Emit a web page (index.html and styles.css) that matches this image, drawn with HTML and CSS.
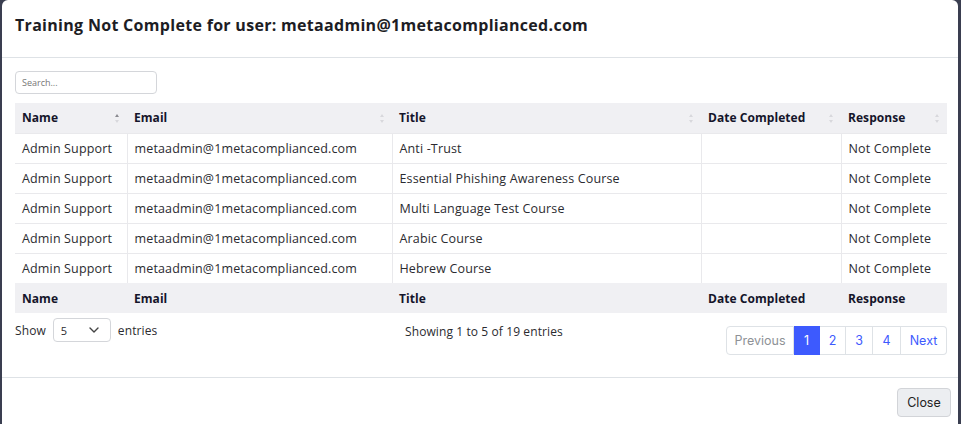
FILE: index.html
```html
<!DOCTYPE html>
<html>
<head>
<meta charset="utf-8">
<link rel="stylesheet" href="styles.css">
</head>
<body>
<div class="modal">
  <div class="modal-header">
    <h5 class="modal-title">Training Not Complete for user: metaadmin@1metacomplianced.com</h5>
  </div>
  <div class="modal-body">
    <div class="search-row">
      <input class="search" type="text" placeholder="Search...">
    </div>
    <table class="dt">
      <thead>
        <tr>
          <th class="c-name sort asc">Name</th>
          <th class="c-email sort">Email</th>
          <th class="c-title sort">Title</th>
          <th class="c-date sort">Date Completed</th>
          <th class="c-resp sort">Response</th>
        </tr>
      </thead>
      <tbody>
        <tr><td>Admin Support</td><td>metaadmin@1metacomplianced.com</td><td>Anti -Trust</td><td></td><td>Not Complete</td></tr>
        <tr><td>Admin Support</td><td>metaadmin@1metacomplianced.com</td><td>Essential Phishing Awareness Course</td><td></td><td>Not Complete</td></tr>
        <tr><td>Admin Support</td><td>metaadmin@1metacomplianced.com</td><td>Multi Language Test Course</td><td></td><td>Not Complete</td></tr>
        <tr><td>Admin Support</td><td>metaadmin@1metacomplianced.com</td><td>Arabic Course</td><td></td><td>Not Complete</td></tr>
        <tr><td>Admin Support</td><td>metaadmin@1metacomplianced.com</td><td>Hebrew Course</td><td></td><td>Not Complete</td></tr>
      </tbody>
      <tfoot>
        <tr><th>Name</th><th>Email</th><th>Title</th><th>Date Completed</th><th>Response</th></tr>
      </tfoot>
    </table>
    <div class="dt-bottom">
      <div class="length">
        <span>Show</span>
        <div class="select"><span>5</span>
          <svg width="10" height="6" viewBox="0 0 10 6"><path d="M1 1l4 4 4-4" fill="none" stroke="#444" stroke-width="1.4" stroke-linecap="round" stroke-linejoin="round"/></svg>
        </div>
        <span>entries</span>
      </div>
      <div class="info">Showing 1 to 5 of 19 entries</div>
      <ul class="pagination">
        <li class="pg disabled w-prev">Previous</li>
        <li class="pg active w-1">1</li>
        <li class="pg w-2">2</li>
        <li class="pg w-3">3</li>
        <li class="pg w-4">4</li>
        <li class="pg w-next">Next</li>
      </ul>
    </div>
  </div>
  <div class="modal-footer">
    <button class="btn-close">Close</button>
  </div>
</div>
</body>
</html>
```
FILE: styles.css
```css
html, body {
  margin: 0;
  padding: 0;
  height: 100%;
  overflow: hidden;
}
body {
  background: #3a3e50;
  font-family: "Open Sans", "Noto Sans", sans-serif;
  color: #212529;
}
.modal {
  margin-left: 2px;
  width: 956px;
  height: 440px;
  background: #fff;
  border-radius: 6px 6px 0 0;
  display: flex;
  flex-direction: column;
}
.modal-header {
  height: 58px;
  flex: none;
  box-sizing: border-box;
  border-bottom: 1px solid #dee2e6;
  padding: 0 13px;
  display: flex;
  align-items: center;
}
.modal-title {
  margin: 0;
  margin-top: -8px;
  font-size: 16px;
  font-weight: 700;
  color: #1d1d24;
  letter-spacing: 0.3px;
}
.modal-body {
  padding: 13px 11px 0 13px;
  height: 320px;
  flex: none;
  box-sizing: border-box;
  border-bottom: 1px solid #dee2e6;
}
.search-row {
  height: 23px;
  margin-bottom: 9px;
}
.search {
  display: block;
  box-sizing: border-box;
  width: 142px;
  height: 23px;
  border: 1px solid #d4d6da;
  border-radius: 4px;
  padding: 0 6px;
  font-family: inherit;
  font-size: 9px;
  outline: none;
}
.search::placeholder { color: #777; }
.dt {
  width: 932px;
  border-collapse: collapse;
  font-size: 12.5px;
  letter-spacing: 0.15px;
  table-layout: fixed;
}
.dt th, .dt td {
  height: 30px;
  box-sizing: border-box;
  padding: 0 7px;
  text-align: left;
  white-space: nowrap;
}
.dt thead th, .dt tfoot th {
  background: #f0f0f3;
  font-weight: 700;
  font-size: 12px;
  letter-spacing: 0.05px;
  color: #15152a;
}
.dt td {
  border-top: 1px solid #e9e9ec;
  border-left: 1px solid #e9e9ec;
  color: #2b2b30;
}
.dt td:first-child { border-left: none; }
.c-name { width: 112px; }
.c-email { width: 265px; }
.c-title { width: 309px; }
.c-date { width: 140px; }
.c-resp { width: 106px; }
.sort { position: relative; }
.sort::before, .sort::after {
  content: "";
  position: absolute;
  right: 8px;
  border-left: 2px solid transparent;
  border-right: 2px solid transparent;
}
.sort::before {
  top: 11px;
  border-bottom: 3px solid #d8d8dc;
}
.sort::after {
  top: 17px;
  border-top: 3px solid #d8d8dc;
}
.sort.asc::before { border-bottom-color: #8a8a90; }
.dt-bottom {
  display: flex;
  align-items: flex-start;
  margin-top: 5px;
  font-size: 12px;
  letter-spacing: 0.1px;
  color: #2b2b30;
}
.length {
  display: flex;
  align-items: center;
  gap: 7px;
  width: 390px;
  height: 24px;
}
.select {
  box-sizing: border-box;
  width: 58px;
  height: 24px;
  border: 1px solid #d4d6da;
  border-radius: 4px;
  display: flex;
  align-items: center;
  justify-content: space-between;
  padding: 0 11px 0 7px;
  font-size: 11px;
}
.info {
  flex: 1;
  height: 24px;
  line-height: 24px;
  padding-top: 2px;
}
.pagination {
  list-style: none;
  margin: 0;
  margin-top: 8px;
  padding: 0;
  display: flex;
  font-family: "Inter", "Liberation Sans", sans-serif;
  font-size: 12.5px;
  letter-spacing: 0;
}
.pg {
  height: 29px;
  box-sizing: border-box;
  border: 1px solid #dee2e6;
  border-left: none;
  display: flex;
  align-items: center;
  justify-content: center;
  color: #3d5afe;
}
.pg:first-child { border-radius: 4px 0 0 4px; border-left: 1px solid #dee2e6; }
.pg:last-child { border-radius: 0 4px 4px 0; }
.w-prev { width: 68px; }
.w-1 { width: 26px; }
.w-2 { width: 26px; }
.w-3 { width: 27px; }
.w-4 { width: 28px; }
.w-next { width: 46px; }
.pg.disabled { color: #8e9196; }
.pg.active { background: #3d5afe; border-color: #3d5afe; color: #fff; }
.modal-footer {
  display: flex;
  justify-content: flex-end;
  padding: 10px 7px 0 0;
}
.btn-close {
  width: 54px;
  height: 29px;
  background: #eceef1;
  border: 1px solid #d2d4d8;
  border-radius: 4px;
  font-family: "Inter", "Liberation Sans", sans-serif;
  font-size: 12.5px;
  color: #222;
  padding: 0;
}
```
